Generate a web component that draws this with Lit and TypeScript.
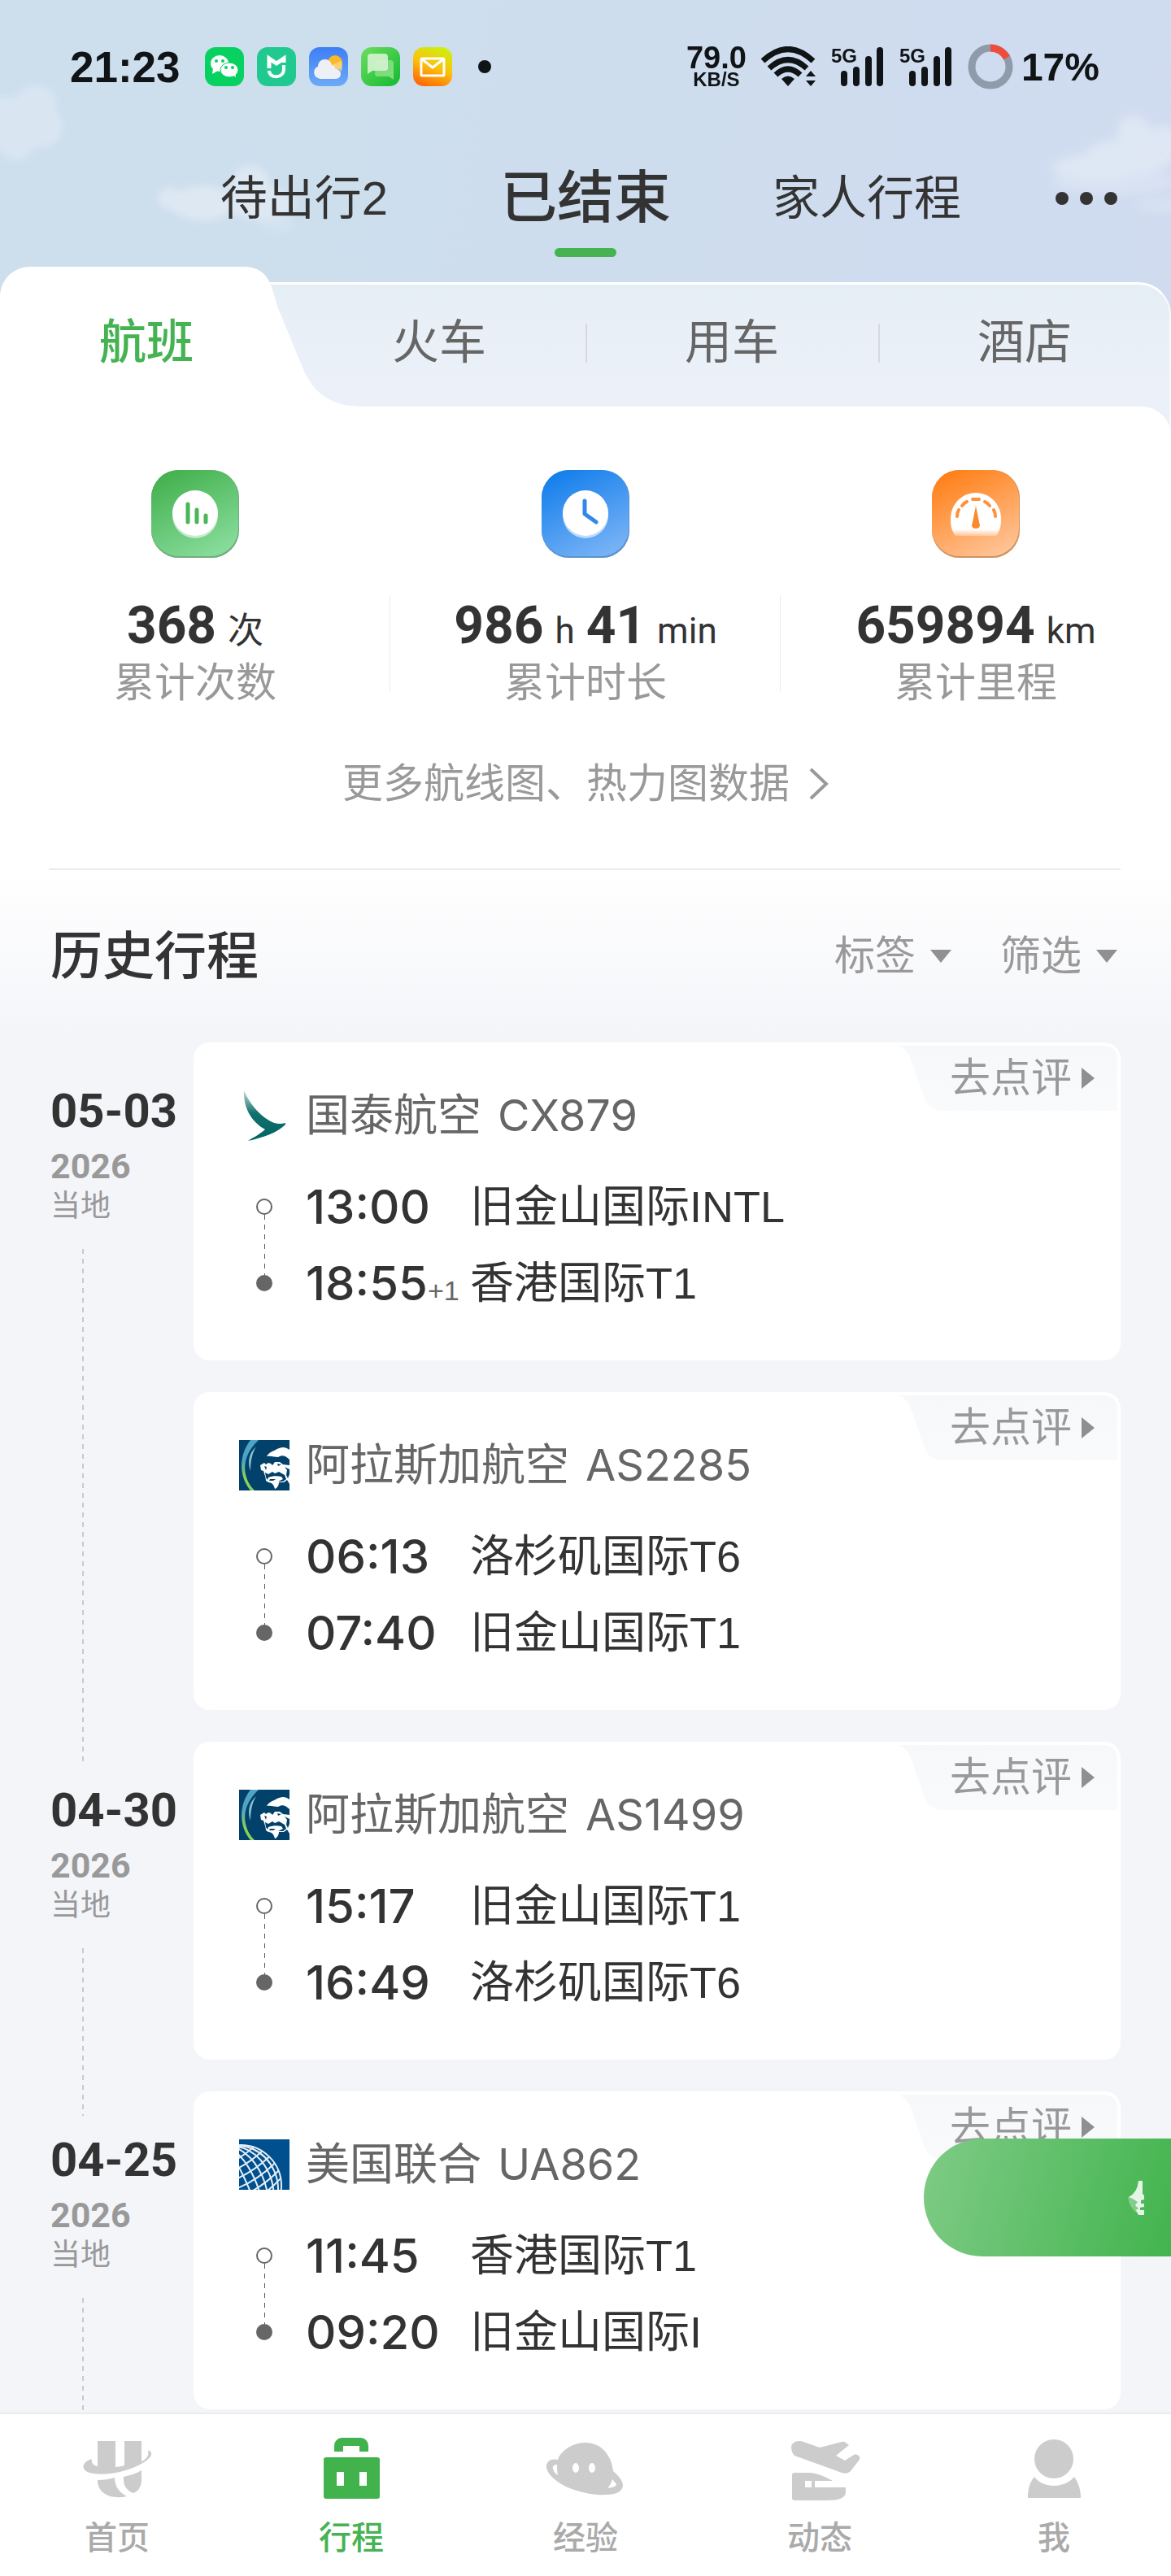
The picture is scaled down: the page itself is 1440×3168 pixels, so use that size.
import { LitElement, html, css, svg, TemplateResult } from "lit";
import { customElement, property } from "lit/decorators.js";
import { classMap } from "lit/directives/class-map.js";

interface Flight {
  airline: string;
  code: string;
  logo: "cathay" | "alaska" | "united";
  departure: string;
  from: string;
  arrival: string;
  to: string;
  dayOffset?: string;
}

interface TripDay {
  date: string;
  year: string;
  flights: Flight[];
}

const TRIPS: TripDay[] = [
  {
    date: "05-03",
    year: "2026",
    flights: [
      {
        airline: "国泰航空",
        code: "CX879",
        logo: "cathay",
        departure: "13:00",
        from: "旧金山国际INTL",
        arrival: "18:55",
        dayOffset: "+1",
        to: "香港国际T1"
      },
      {
        airline: "阿拉斯加航空",
        code: "AS2285",
        logo: "alaska",
        departure: "06:13",
        from: "洛杉矶国际T6",
        arrival: "07:40",
        to: "旧金山国际T1"
      }
    ]
  },
  {
    date: "04-30",
    year: "2026",
    flights: [
      {
        airline: "阿拉斯加航空",
        code: "AS1499",
        logo: "alaska",
        departure: "15:17",
        from: "旧金山国际T1",
        arrival: "16:49",
        to: "洛杉矶国际T6"
      }
    ]
  },
  {
    date: "04-25",
    year: "2026",
    flights: [
      {
        airline: "美国联合",
        code: "UA862",
        logo: "united",
        departure: "11:45",
        from: "香港国际T1",
        arrival: "09:20",
        to: "旧金山国际I"
      }
    ]
  }
];

const LOGOS: Record<Flight["logo"], TemplateResult> = {
  cathay: svg`
    <linearGradient id="wing" x1="0" y1="0" x2="0" y2="1">
      <stop offset="0" stop-color="#c4dedd" />
      <stop offset="0.45" stop-color="#12706d" />
      <stop offset="1" stop-color="#006564" />
    </linearGradient>
    <path
      d="M6 0C5 20 14 38 32 48C24 55 17 58 11 62C30 58 47 52 57 42V40C50 42 43 41 37 37C22 28 12 14 6 0Z"
      fill="url(#wing)"
    />`,
  alaska: svg`
    <linearGradient id="ruff" x1="0" y1="0" x2="0" y2="1">
      <stop offset="0.4" stop-color="#4fa3c4" />
      <stop offset="0.75" stop-color="#8bd05a" />
    </linearGradient>
    <rect width="62" height="62" fill="#02426a" />
    <path d="M14 0H24C10 13 5 28 8 42C10 51 14 57 19 62H14C-1 44 0 18 14 0Z" fill="url(#ruff)" />
    <path d="M21 8C12 16 10 27 14 38C14 27 16 16 21 8Z" fill="#8cbfd6" />
    <path d="M34 20C37 15 41 14 45 12C50 9 56 7 62 12V24C57 19 53 18 48 21C44 21 39 19 34 20Z" fill="#fff" />
    <path
      d="M26 31L31 28L33 30C36 27 39 28 41 31L44 27H50L54 30L62 31V54L59 49L55 52H49C49 56 46 60 44 60C43 56 41 52 36 52L33 50C33 46 31 42 30 38L27 37Z"
      fill="#fff"
    />
    <path
      d="M31 24H43L42 26H32ZM45 24L52 22L60 25V28C55 25 50 25 45 27ZM32 40L36 42L41 39L44 41L49 39L56 43L58 48L54 51H48L54 48L52 45C47 44 41 44 36 46L35 49L33 46ZM38 48H45L42 50H37Z"
      fill="#02426a"
    />
    <path d="M31 32L34 33L33 37ZM47 29L52 30L48 32ZM56 33L59 37L58 43L60 47L62 42V36Z" fill="#02426a" />`,
  united: svg`
    <clipPath id="tile"><rect width="62" height="62" /></clipPath>
    <rect width="62" height="62" fill="#00508f" />
    <g clip-path="url(#tile)" fill="none" stroke="#e4eef6">
      <circle cx="2" cy="57" r="50" stroke-width="2" />
      <g transform="rotate(-24 2 57)" stroke-width="2">
        <ellipse cx="2" cy="57" rx="45" ry="50" />
        <ellipse cx="2" cy="57" rx="38" ry="50" />
        <ellipse cx="2" cy="57" rx="29" ry="50" />
        <ellipse cx="2" cy="57" rx="19" ry="50" />
        <ellipse cx="2" cy="57" rx="8" ry="50" />
        <path
          d="M-20 14Q2 20 24 12M-30 21Q2 31 36 20M-38 30Q2 43 43 29M-42 40Q2 55 48 39M-46 50Q2 67 51 49M-48 60Q2 79 52 59M-48 70Q2 90 50 69"
        />
      </g>
    </g>`
};

@customElement("flight-card")
class FlightCard extends LitElement {
  @property({ attribute: false })
  public flight: Flight = TRIPS[0].flights[0];

  render() {
    const f = this.flight;
    return html`
      <article class="card">
        <a class="review" href="#review">
          <svg class="review-shape" viewBox="0 0 270 80" preserveAspectRatio="none" aria-hidden="true">
            <linearGradient id="fade" x1="0" y1="0" x2="0" y2="1">
              <stop offset="0" stop-color="#f7f8fa" />
              <stop offset="1" stop-color="#f9fafb" />
            </linearGradient>
            <path
              d="M0 0H252Q270 0 270 18V80H58C44 80 36 74 32 62L16 16Q10 2 0 0Z"
              fill="url(#fade)"
            />
          </svg>
          <span class="review-text">去点评</span>
          <svg class="review-arrow" viewBox="0 0 16 26" aria-hidden="true">
            <path d="M0 0L16 13L0 26Z" fill="#8f8f8f" />
          </svg>
        </a>
        <header class="title">
          <svg class="logo" viewBox="0 0 62 62" aria-hidden="true">${LOGOS[f.logo]}</svg>
          <span class="airline">${f.airline}</span>
          <span class="code">${f.code}</span>
        </header>
        <div class="route">
          <div class="stops" aria-hidden="true">
            <span class="dot"></span>
            <span class="dash"></span>
            <span class="dot filled"></span>
          </div>
          <div class="legs">
            ${this.renderLeg(f.departure, f.from)}
            ${this.renderLeg(f.arrival, f.to, f.dayOffset)}
          </div>
        </div>
      </article>
    `;
  }

  protected renderLeg(time: string, place: string, offset?: string) {
    return html`
      <div class="leg">
        <span class="time"
          >${time}${offset ? html`<small class="offset">${offset}</small>` : null}</span
        >
        <span class="place">${place}</span>
      </div>
    `;
  }

  static styles = css`
    :host {
      display: block;
    }

    .card {
      position: relative;
      box-sizing: border-box;
      padding: 58px 56px 48px;
      border-radius: 20px;
      background: #fff;
      color: #333;
      font-size: 54px;
    }

    .review {
      position: absolute;
      top: 4px;
      right: 4px;
      display: flex;
      align-items: center;
      gap: 12px;
      box-sizing: border-box;
      width: 270px;
      height: 80px;
      padding: 0 30px 0 64px;
      color: #999;
      font-size: 50px;
      line-height: 80px;
      text-decoration: none;
      white-space: nowrap;
    }

    .review-shape {
      position: absolute;
      inset: 0;
      width: 100%;
      height: 100%;
    }

    .review-text {
      position: relative;
    }

    .review-arrow {
      position: relative;
      flex: none;
      width: 16px;
      height: 26px;
    }

    .title {
      display: flex;
      align-items: center;
      gap: 20px;
      color: #666;
      line-height: 64px;
    }

    .logo {
      flex: none;
      width: 62px;
      height: 62px;
    }

    .code {
      font-family: Inter, sans-serif;
    }

    .route {
      display: flex;
      gap: 20px;
      margin-top: 33px;
    }

    .stops {
      display: flex;
      flex-direction: column;
      align-items: center;
      width: 62px;
      padding: 37px 0;
      box-sizing: border-box;
    }

    .dot {
      box-sizing: border-box;
      width: 20px;
      height: 20px;
      border: 2px solid #666;
      border-radius: 50%;
    }

    .filled {
      background: #666;
    }

    .dash {
      flex: 1;
      width: 1px;
      background: repeating-linear-gradient(#555 0 6px, transparent 6px 12px);
    }

    .leg {
      display: flex;
      align-items: center;
      line-height: 94px;
      white-space: nowrap;
    }

    .time {
      width: 202px;
      font-family: Inter, "Noto Sans CJK SC", sans-serif;
      font-size: 58px;
      font-weight: 500;
    }

    .offset {
      color: #666;
      font-family: "Liberation Sans", sans-serif;
      font-size: 34px;
      font-weight: 400;
      line-height: 1;
    }
  `;
}

const SEGMENTS = ["航班", "火车", "用车", "酒店"];

const STATS = [
  { icon: "count", label: "累计次数", parts: [["368", "次"]] },
  {
    icon: "clock",
    label: "累计时长",
    parts: [
      ["986", "h"],
      ["41", "min"]
    ]
  },
  { icon: "gauge", label: "累计里程", parts: [["659894", "km"]] }
];

const STAT_COLORS: Record<string, [string, string]> = {
  count: ["#43b04d", "#87dc9b"],
  clock: ["#127eeb", "#78b2f6"],
  gauge: ["#ff7f16", "#ffc294"]
};

const STAT_GLYPHS: Record<string, TemplateResult> = {
  count: svg`
    <circle cx="54" cy="56" r="28" fill="#fff" opacity="0.6" />
    <circle cx="54" cy="53" r="28" fill="#fff" />
    <path d="M45 42V64M56 49V64M67 56V64" stroke="#4bb558" stroke-width="5" stroke-linecap="round" />`,
  clock: svg`
    <circle cx="54" cy="56" r="28" fill="#fff" opacity="0.6" />
    <circle cx="54" cy="53" r="28" fill="#fff" />
    <path d="M53 38V54L67 64" fill="none" stroke="#3088ea" stroke-width="5" stroke-linecap="round" stroke-linejoin="round" />`,
  gauge: svg`
    <linearGradient id="gauge-face" x1="0" y1="0" x2="0" y2="1">
      <stop offset="0.85" stop-color="#fff" />
      <stop offset="1" stop-color="#fff" stop-opacity="0.3" />
    </linearGradient>
    <path d="M29 81C24 75 23 68 23 60C23 42 37 28 54 28S85 42 85 60C85 68 84 75 79 81Z" fill="url(#gauge-face)" />
    <path d="M31 57Q31 52 33 49M37 44Q40 40 43 39M50 36H58M65 39Q69 41 71 44M76 49Q78 53 78 57" fill="none" stroke="#ff9138" stroke-width="4" stroke-linecap="round" />
    <path d="M54 44L58 64Q61 72 54 72T50 64Z" fill="#fb8a2c" />`
};

const NAV = [
  {
    label: "首页",
    icon: svg`
      <path d="M11 29C3 31 -1 37 1 41C4 47 18 49 34 47C58 44 82 32 84 24C85 21 82 18 80 19C82 25 77 30 72 32V7H51V37C47 38 43 39 40 39V7H18V38C12 37 10 33 11 29Z" />
      <path d="M18 55C26 55 33 54 39 52C39 62 44 70 54 75C36 79 18 73 18 55Z" />
      <path d="M50 51C58 49 66 47 72 43V55C72 63 68 69 62 71C54 68 49 62 50 51Z" />`
  },
  {
    label: "行程",
    icon: svg`
      <path d="M21 20V14C21 7 25 3 31 3H53C59 3 63 7 63 14V20H52V13H32V20Z" />
      <path fill-rule="evenodd" d="M11 27H74Q77 27 77 30V75Q77 78 74 78H11Q8 78 8 75V30Q8 27 11 27ZM24 45V62H33V45ZM52 45V62H61V45Z" />`
  },
  {
    label: "经验",
    icon: svg`
      <path
        fill-rule="evenodd"
        transform="translate(-6 0)"
        d="M82 44C80 24 67 9 48 9C31 9 17 20 14 30C6 28 -1 32 0 40C2 50 16 61 34 67C50 72 62 74 73 73C86 73 94 69 94 61C94 56 88 49 82 44ZM13 36C10 36 7 38 8 41C9 45 11 47 14 49C13 45 13 41 13 36ZM36 34C34 34 32 37 32 40S34 46 36 46S40 43 40 40S38 34 36 34ZM56 34C54 34 52 37 52 40S54 46 56 46S60 43 60 40S58 34 56 34ZM81 54L86 60Q86 64 75 65Q79 61 81 54Z"
      />`
  },
  {
    label: "动态",
    icon: svg`
      <path d="M7 14C7 9 15 5 22 8L42 15L69 8Q72 7 74 9L78 12L62 25L73 31L84 24Q87 22 91 26Q92 28 90 31L80 44Q76 48 69 46L11 25Q7 21 7 14Z" />
      <path fill-rule="evenodd" d="M11 46H29C38 46 49 51 58 56H36V64H74V70C74 77 65 80 52 80H11Q8 80 8 77V49Q8 46 11 46ZM24 56V64H32V56Z" />`
  },
  {
    label: "我",
    icon: svg`
      <circle cx="42" cy="29" r="24" />
      <path d="M18 51C23 58 32 62 42 62S61 58 67 51C72 58 75 66 75 77H10C10 66 12 58 18 51Z" />`
  }
];

@customElement("app-root")
class AppRoot extends LitElement {
  render() {
    return html`
      <div class="sky">
        ${this.renderClouds()} ${this.renderStatusBar()}
        <nav class="tabs">
          <button class="tab first" type="button">待出行2</button>
          <button class="tab current" type="button">已结束<i class="underline"></i></button>
          <button class="tab" type="button">家人行程</button>
          <button class="more-menu" type="button" aria-label="更多">
            <i class="menu-dot"></i><i class="menu-dot"></i><i class="menu-dot"></i>
          </button>
        </nav>
        <div class="segments">
          <svg class="segment-shape" viewBox="0 0 446 172" aria-hidden="true">
            <path
              d="M0 172V38C0 16 16 0 38 0H300C317 0 327 8 332 20C336 30 339 42 342 51L372 124C386 158 410 172 446 172Z"
              fill="#fff"
            />
          </svg>
          ${SEGMENTS.map(
            (s, i) =>
              html`<button class=${classMap({ segment: true, active: i === 0 })} type="button">
                ${s}
              </button>`
          )}
        </div>
      </div>
      <main class="content">
        <section class="summary">
          <div class="stats">${STATS.map((s) => this.renderStat(s))}</div>
          <a class="more" href="#map"
            >更多航线图、热力图数据<svg class="chevron" viewBox="0 0 24 40" aria-hidden="true">
              <path d="M2 2L21 20L2 38" fill="none" stroke="#999" stroke-width="4" /></svg
          ></a>
        </section>
        <section class="history">
          <header class="history-head">
            <h2 class="heading">历史行程</h2>
            ${this.renderFilter("标签")} ${this.renderFilter("筛选")}
          </header>
          ${TRIPS.map(
            (day) => html`
              <div class="day">
                <div class="rail">
                  <span class="date">${day.date}</span>
                  <span class="year">${day.year}</span>
                  <span class="zone">当地</span>
                  <span class="line"></span>
                </div>
                <div class="cards">
                  ${day.flights.map((f) => html`<flight-card .flight=${f}></flight-card>`)}
                </div>
              </div>
            `
          )}
        </section>
      </main>
      <button class="floating" type="button" aria-label="添加行程">
        <svg class="floating-glyph" viewBox="0 0 20 42" aria-hidden="true">
          <path d="M13 0H18V16L20 18V23L16 24V28H20V32L15 33V36H20V42H13L10 36L13 34L9 30L12 26L6 22L1 20Q12 14 13 0Z" fill="#fff" opacity="0.85" />
          <path d="M0 20L12 22V40Q2 34 0 20Z" fill="#fff" opacity="0.3" />
        </svg>
      </button>
      <nav class="bottom">
        ${NAV.map(
          (n, i) => html`
            <a class=${classMap({ "nav-item": true, on: i === 1 })} href="#nav">
              <svg class="nav-icon" viewBox="0 0 84 84" aria-hidden="true">${n.icon}</svg>
              ${n.label}
            </a>
          `
        )}
      </nav>
    `;
  }

  protected renderClouds() {
    return html`
      <svg class="clouds left" viewBox="0 0 400 300" aria-hidden="true">
        <filter id="soft" x="-20%" y="-20%" width="140%" height="140%">
          <feGaussianBlur stdDeviation="5" />
        </filter>
        <g fill="#e2ebf5" filter="url(#soft)">
          <g opacity="0.6">
            <circle cx="44" cy="130" r="26" />
            <circle cx="8" cy="148" r="30" />
            <circle cx="52" cy="156" r="26" />
            <circle cx="20" cy="174" r="24" />
          </g>
          <g opacity="0.75">
            <circle cx="208" cy="244" r="14" />
            <ellipse cx="250" cy="250" rx="42" ry="22" />
            <circle cx="308" cy="228" r="25" />
            <ellipse cx="320" cy="250" rx="44" ry="20" />
            <ellipse cx="340" cy="274" rx="22" ry="12" opacity="0.5" />
          </g>
        </g>
      </svg>
      <svg class="clouds right" viewBox="0 0 200 300" aria-hidden="true">
        <g fill="#e4ecf6" filter="url(#soft-right)" opacity="0.7">
          <filter id="soft-right" x="-20%" y="-20%" width="140%" height="140%">
            <feGaussianBlur stdDeviation="6" />
          </filter>
          <circle cx="154" cy="162" r="20" />
          <ellipse cx="150" cy="192" rx="56" ry="22" />
          <ellipse cx="110" cy="206" rx="56" ry="16" />
          <circle cx="190" cy="178" r="24" />
          <ellipse cx="130" cy="224" rx="76" ry="16" opacity="0.6" />
          <ellipse cx="186" cy="252" rx="28" ry="8" opacity="0.6" />
        </g>
      </svg>
    `;
  }

  protected renderStatusBar() {
    const bars = html`
      <svg class="signal" viewBox="0 0 66 50" aria-hidden="true">
        <path d="M16 34V45M31 29V45M46 16V45M60 5V45" stroke="#101417" stroke-width="8" stroke-linecap="round" />
      </svg>
    `;
    return html`
      <div class="status">
        <span class="clock">21:23</span>
        <svg class="app" viewBox="0 0 48 48" aria-hidden="true">
          <rect width="48" height="48" rx="13" fill="#07d160" />
          <ellipse cx="18" cy="20" rx="11" ry="10" fill="#fff" />
          <path d="M10 26L9 33L16 29Z" fill="#fff" />
          <ellipse cx="30" cy="28" rx="11" ry="9" fill="#fff" stroke="#07d160" />
          <path d="M34 34L38 37L37 31Z" fill="#fff" />
          <g fill="#07d160">
            <circle cx="14" cy="17" r="2" /><circle cx="22" cy="17" r="2" />
            <circle cx="26" cy="25" r="2" /><circle cx="34" cy="25" r="2" />
          </g>
        </svg>
        <svg class="app" viewBox="0 0 48 48" aria-hidden="true">
          <rect width="48" height="48" rx="13" fill="#1fc98f" />
          <path d="M15 26V14L24 20L33 14V19" fill="none" stroke="#fff" stroke-width="5" />
          <path d="M15 29C15 39 33 39 33 27V22" fill="none" stroke="#fff" stroke-width="4" />
        </svg>
        <svg class="app" viewBox="0 0 48 48" aria-hidden="true">
          <linearGradient id="weather" x1="0" y1="0" x2="0" y2="1">
            <stop offset="0" stop-color="#3e7ef5" /><stop offset="1" stop-color="#6cabf8" />
          </linearGradient>
          <rect width="48" height="48" rx="13" fill="url(#weather)" />
          <circle cx="32" cy="19" r="9" fill="#fdb827" />
          <path d="M15 39C3 38 5 25 11 24C11 13 26 12 28 22C32 22 32 25 33 27C40 27 42 38 33 39Z" fill="#edf1f5" />
          <path d="M28 22C32 22 32 25 33 27Q38 27 39 30C42 26 41 20 39 17Z" fill="#fbd885" opacity="0.8" />
        </svg>
        <svg class="app" viewBox="0 0 48 48" aria-hidden="true">
          <linearGradient id="chat" x1="0" y1="0" x2="1" y2="1">
            <stop offset="0" stop-color="#6ddd5f" /><stop offset="1" stop-color="#12ba32" />
          </linearGradient>
          <rect width="48" height="48" rx="13" fill="url(#chat)" />
          <path d="M18 16H36Q40 16 40 20V40L34 36H20Q17 36 17 32Z" fill="#7edc7c" />
          <path d="M12 8H29Q33 8 33 12V26Q33 29 29 29H14L8 33V12Q8 8 12 8Z" fill="#d5f3d0" opacity="0.9" />
        </svg>
        <svg class="app" viewBox="0 0 48 48" aria-hidden="true">
          <linearGradient id="mail" x1="0.7" y1="0" x2="0.3" y2="1">
            <stop offset="0" stop-color="#cdf00d" /><stop offset="0.5" stop-color="#fdbf0d" />
            <stop offset="1" stop-color="#fb6a06" />
          </linearGradient>
          <rect width="48" height="48" rx="13" fill="url(#mail)" />
          <rect x="10" y="14" width="28" height="21" rx="1" fill="none" stroke="#fff" stroke-width="3" />
          <path d="M11 15L24 25L37 15" fill="none" stroke="#fff" stroke-width="3" />
        </svg>
        <i class="notice"></i>
        <span class="speed">79.0<small class="unit">KB/S</small></span>
        <svg class="wifi" viewBox="0 0 68 50" aria-hidden="true">
          <g fill="none" stroke="#101417" stroke-width="7">
            <path d="M2 18Q33 -11 64 18" />
            <path d="M10 27Q33 6 56 27" />
            <path d="M18 35Q33 21 48 35" />
          </g>
          <path d="M25 40Q33 33 41 40L33 49Z" fill="#101417" />
          <path d="M55 37L61 30L67 37ZM55 42L61 49L67 42Z" fill="#101417" />
        </svg>
        <span class="cell"><span class="network">5G</span>${bars}</span>
        <span class="cell"><span class="network">5G</span>${bars}</span>
        <svg class="ring" viewBox="0 0 56 56" aria-hidden="true">
          <circle cx="28" cy="28" r="23" fill="none" stroke="#8f9bab" stroke-width="9" />
          <path d="M28 5A23 23 0 0 1 48 17" fill="none" stroke="#ef4c3e" stroke-width="9" />
        </svg>
        <span class="battery">17%</span>
      </div>
    `;
  }

  protected renderStat(stat: (typeof STATS)[number]) {
    const [from, to] = STAT_COLORS[stat.icon];
    return html`
      <div class="stat">
        <svg class="stat-icon" viewBox="0 0 108 108" aria-hidden="true">
          <linearGradient id="tint-${stat.icon}" x1="0.2" y1="0" x2="0.7" y2="1">
            <stop offset="0" stop-color=${from} />
            <stop offset="1" stop-color=${to} />
          </linearGradient>
          <rect width="108" height="108" rx="34" fill=${from} />
          <rect width="108" height="108" rx="34" fill="#a0a8ac" opacity="0.5" />
          <rect width="107" height="106" rx="34" fill="url(#tint-${stat.icon})" />
          ${STAT_GLYPHS[stat.icon]}
        </svg>
        <div class="figures">
          ${stat.parts.map(
            ([value, unit]) =>
              html`<b class="value">${value}</b><span class="measure">${unit}</span>`
          )}
        </div>
        <span class="stat-label">${stat.label}</span>
      </div>
    `;
  }

  protected renderFilter(label: string) {
    return html`
      <label class="filter">
        <select class="select" aria-label=${label}>
          <option>${label}</option>
        </select>
        <svg class="caret" viewBox="0 0 26 16" aria-hidden="true">
          <path d="M0 0H26L13 16Z" fill="#909090" />
        </svg>
      </label>
    `;
  }

  static styles = css`
    :host {
      position: relative;
      display: flex;
      flex-direction: column;
      height: 100vh;
      overflow: hidden;
      background: #f4f5f9;
      color: #333;
      font-family: "Liberation Sans", "Noto Sans CJK SC", sans-serif;
    }

    button,
    select {
      margin: 0;
      padding: 0;
      border: 0;
      background: none;
      color: inherit;
      font: inherit;
    }

    .sky {
      position: relative;
      flex: none;
      background: linear-gradient(100deg, #cddeed 30%, #d0dbf0);
    }

    .clouds {
      position: absolute;
      top: 0;
      height: 300px;
    }

    .left {
      left: 0;
      width: 400px;
    }

    .right {
      right: 0;
      width: 200px;
    }

    .status {
      position: relative;
      display: flex;
      align-items: center;
      box-sizing: border-box;
      height: 164px;
      padding: 0 88px 0 86px;
      color: #101417;
      font-weight: 700;
    }

    .clock {
      margin-right: 30px;
      font-size: 53px;
    }

    .app {
      width: 48px;
      height: 48px;
      margin-right: 16px;
    }

    .notice {
      width: 16px;
      height: 16px;
      margin: 0 auto 0 16px;
      border-radius: 50%;
      background: #101417;
    }

    .speed {
      display: flex;
      flex-direction: column;
      align-items: center;
      margin-right: 18px;
      font-size: 38px;
      line-height: 32px;
    }

    .unit {
      font-size: 24px;
      line-height: 22px;
    }

    .wifi {
      width: 68px;
      height: 50px;
      margin-right: 18px;
    }

    .cell {
      position: relative;
      width: 66px;
      height: 50px;
      margin-right: 18px;
    }

    .signal {
      width: 66px;
      height: 50px;
    }

    .network {
      position: absolute;
      top: 0;
      left: 0;
      font-size: 24px;
      line-height: 24px;
    }

    .ring {
      width: 56px;
      height: 56px;
      margin-right: 10px;
    }

    .battery {
      font-size: 48px;
    }

    .tabs {
      position: relative;
      display: grid;
      grid-template-columns: 201fr 346fr 346fr 346fr 201fr;
      align-items: start;
      box-sizing: border-box;
      height: 164px;
      padding-top: 40px;
    }

    .tab {
      display: flex;
      flex-direction: column;
      align-items: center;
      gap: 21px;
      font-size: 58px;
      line-height: 80px;
      white-space: nowrap;
    }

    .first {
      grid-column: 2;
    }

    .current {
      font-size: 70px;
      font-weight: 500;
    }

    .underline {
      width: 76px;
      height: 11px;
      border-radius: 6px;
      background: #45b352;
    }

    .more-menu {
      display: flex;
      justify-content: flex-end;
      align-items: center;
      gap: 14px;
      height: 80px;
      padding-right: 66px;
    }

    .menu-dot {
      width: 16px;
      height: 16px;
      border-radius: 50%;
      background: #333;
    }

    .segments {
      position: relative;
      display: grid;
      grid-template-columns: repeat(4, 1fr);
      box-sizing: border-box;
      height: 212px;
      padding: 19px 0 40px;
      margin-bottom: -40px;
    }

    .segments::before {
      content: "";
      position: absolute;
      inset: 19px 0 0 20px;
      border-top: 3px solid #fff;
      border-right: 2px solid #f6f9fc;
      border-radius: 0 40px 0 0;
      background: linear-gradient(#e6eef5, #ecf1f9 70%);
    }

    .segment-shape {
      position: absolute;
      top: 0;
      left: 0;
      width: 446px;
      height: 172px;
    }

    .segment {
      position: relative;
      padding-bottom: 6px;
      color: #666;
      font-size: 58px;
      line-height: 80px;
    }

    .segment:nth-of-type(n + 3)::before {
      content: "";
      position: absolute;
      top: 51px;
      left: 0;
      width: 2px;
      height: 48px;
      background: #d6dae0;
    }

    .active {
      color: #45b352;
      font-weight: 500;
    }

    .content {
      position: relative;
      flex: 1;
      min-height: 0;
      overflow: hidden;
      border-radius: 0 36px 0 0;
      background: #f4f5f9;
    }

    .summary {
      padding: 78px 0 74px;
      background: #fff;
    }

    .stats {
      display: grid;
      grid-template-columns: repeat(3, 1fr);
    }

    .stat {
      position: relative;
      display: flex;
      flex-direction: column;
      align-items: center;
    }

    .stat + .stat::before {
      content: "";
      position: absolute;
      bottom: 20px;
      left: -1px;
      width: 1px;
      height: 118px;
      background: #ebebeb;
    }

    .stat-icon {
      width: 108px;
      height: 108px;
      margin-bottom: 48px;
    }

    .figures {
      display: flex;
      align-items: baseline;
      gap: 14px;
      height: 72px;
      margin-bottom: 4px;
      font-family: Roboto, "Noto Sans CJK SC", sans-serif;
      line-height: 72px;
      white-space: nowrap;
    }

    .value {
      font-size: 64px;
    }

    .measure {
      font-size: 44px;
    }

    .stat-label,
    .more {
      color: #999;
      font-size: 50px;
      line-height: 60px;
    }

    .more {
      display: flex;
      justify-content: center;
      align-items: center;
      gap: 24px;
      margin-top: 64px;
      text-decoration: none;
    }

    .chevron {
      width: 24px;
      height: 40px;
    }

    .history {
      padding: 0 62px 0 60px;
      background: linear-gradient(#fff, #f4f5f9 210px);
    }

    .history-head {
      display: flex;
      align-items: center;
      gap: 60px;
      padding: 66px 4px 66px 2px;
      border-top: 2px solid #ebebeb;
    }

    .heading {
      flex: 1;
      margin: 0;
      font-size: 64px;
      font-weight: 500;
      line-height: 80px;
    }

    .filter {
      display: flex;
      align-items: center;
      gap: 18px;
      color: #999;
      font-size: 50px;
      line-height: 80px;
    }

    .select {
      appearance: none;
    }

    .caret {
      width: 26px;
      height: 16px;
    }

    .day {
      display: flex;
      padding-bottom: 39px;
    }

    /* The rail hangs past its own day so that its line meets the next date. */
    .rail {
      display: flex;
      flex-direction: column;
      flex: none;
      box-sizing: border-box;
      width: 178px;
      margin: 30px 0 -69px;
      padding: 26px 0 0 2px;
      color: #999;
      font-family: Roboto, "Noto Sans CJK SC", sans-serif;
    }

    .date {
      color: #333;
      font-size: 58px;
      font-weight: 700;
      line-height: 56px;
    }

    .year {
      margin-top: 14px;
      font-size: 43px;
      font-weight: 700;
      line-height: 52px;
    }

    .zone {
      font-family: "Liberation Sans", "Noto Sans CJK SC", sans-serif;
      font-size: 37px;
      line-height: 48px;
    }

    .line {
      flex: 1;
      width: 2px;
      margin: 28px 0 0 39px;
      background: repeating-linear-gradient(#c9cacd 0 6px, transparent 6px 12px);
    }

    .cards {
      display: flex;
      flex: 1;
      flex-direction: column;
      gap: 39px;
    }

    .floating {
      position: absolute;
      right: 0;
      bottom: 393px;
      display: flex;
      justify-content: flex-end;
      align-items: center;
      width: 304px;
      height: 145px;
      padding-right: 33px;
      border-radius: 72px 0 0 72px;
      background: linear-gradient(105deg, #7fcb86, #42b44e);
    }

    .floating-glyph {
      width: 20px;
      height: 42px;
    }

    .bottom {
      position: relative;
      display: grid;
      grid-template-columns: repeat(5, 1fr);
      flex: none;
      box-sizing: border-box;
      height: 201px;
      padding-top: 26px;
      border-top: 2px solid #ececee;
      background: #fff;
    }

    .nav-item {
      display: flex;
      flex-direction: column;
      align-items: center;
      gap: 18px;
      color: #aaa;
      font-size: 40px;
      font-weight: 500;
      line-height: 48px;
      text-decoration: none;
    }

    .nav-icon {
      width: 84px;
      height: 84px;
      overflow: visible;
      fill: #ccc;
    }

    .on {
      color: #45b352;
    }

    .on .nav-icon {
      fill: #42b24c;
    }
  `;
}

export { AppRoot, FlightCard };
